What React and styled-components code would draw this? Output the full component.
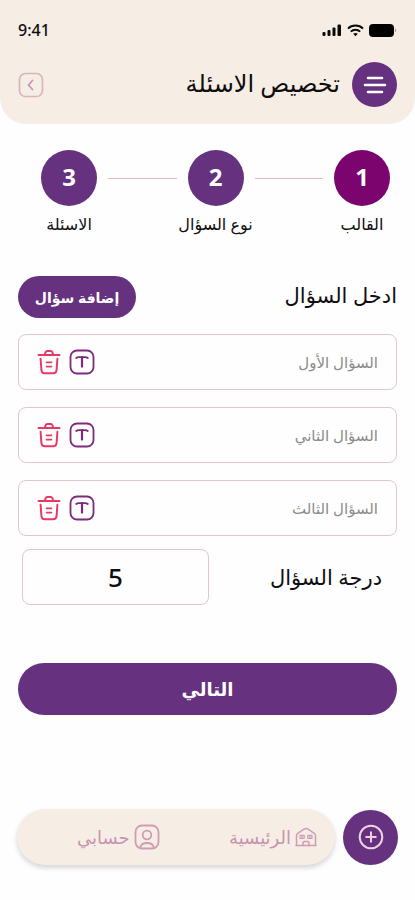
// Importing dependencies
import React from 'react'
import styled, { createGlobalStyle } from 'styled-components'

const steps = [
    { number: 1, label: 'القالب', active: true },
    { number: 2, label: 'نوع السؤال' },
    { number: 3, label: 'الاسئلة' },
]

const questions = ['السؤال الأول', 'السؤال الثاني', 'السؤال الثالث']

// Icons
const SignalIcon = () => (
    <svg width="20" height="14" viewBox="0 0 20 14" fill="#0b0a09" aria-hidden="true">
        <rect x="0.5" y="9" width="3" height="4" rx="1" />
        <rect x="5.5" y="7" width="3" height="6" rx="1" />
        <rect x="10.5" y="4.5" width="3" height="8.5" rx="1" />
        <rect x="15.5" y="1.5" width="3.5" height="11.5" rx="1" />
    </svg>
)

const WifiIcon = () => (
    <svg width="17" height="13" viewBox="0 0 17 13" fill="none" stroke="#0b0a09" strokeWidth="2" aria-hidden="true">
        <path d="M1 4.6C5 .6 12 .6 16 4.6" />
        <path d="M3.8 7.6c2.7-2.6 6.7-2.6 9.4 0" />
        <path d="M6.2 9.8c1.4-1.2 3.2-1.2 4.6 0L8.5 12.2z" fill="#0b0a09" stroke="none" />
    </svg>
)

const BatteryIcon = () => (
    <svg width="28" height="13" viewBox="0 0 28 13" aria-hidden="true">
        <rect x="0" y="0" width="25" height="13" rx="4" fill="#000" />
        <path d="M26.2 4.6c1.4.8 1.4 3 0 3.8z" fill="#8d8883" />
    </svg>
)

const MenuIcon = () => (
    <svg width="24" height="20" viewBox="0 0 24 20" stroke="#fff" strokeWidth="2.6" strokeLinecap="round" aria-hidden="true">
        <path d="M5 3h14M2 10h20M5 17h14" />
    </svg>
)

const BackIcon = () => (
    <svg width="26" height="26" viewBox="0 0 26 26" fill="none" stroke="#dbb3bf" strokeWidth="1.7" strokeLinecap="round" strokeLinejoin="round" aria-hidden="true">
        <rect x="1.5" y="1.5" width="23" height="23" rx="6" />
        <path d="M14.5 8.5L10.5 13l4 4.500" stroke="#c596b1" />
    </svg>
)

const TextIcon = () => (
    <svg width="26" height="26" viewBox="0 0 26 26" fill="none" stroke="#7d2a7c" strokeWidth="1.8" strokeLinecap="round" strokeLinejoin="round" aria-hidden="true">
        <rect x="1.5" y="1.5" width="23" height="23" rx="6.5" />
        <path d="M7.200 9c.8-.7 1.600-.9 2.600-.9h6.400c1 0 1.800.2 2.600.9" />
        <path d="M13 8.200v9.400" strokeWidth="2.200" />
    </svg>
)

const TrashIcon = () => (
    <svg width="24" height="26" viewBox="0 0 24 26" fill="none" stroke="#e63a66" strokeWidth="2" strokeLinecap="round" strokeLinejoin="round" aria-hidden="true">
        <path d="M1.500 6h21" />
        <path d="M7.800 5.600l.8-2.300c.3-.9.800-1.300 1.700-1.300h3.400c.9 0 1.400.4 1.700 1.300l.8 2.300" />
        <path d="M3.600 9.800l.8 11.200c.2 2.400 1.200 3.300 3.400 3.300h8.400c2.200 0 3.200-.9 3.400-3.300l.8-11.200" />
        <path d="M9.500 13.400h5M9.500 17.600h5" strokeWidth="1.600" />
    </svg>
)

const HomeIcon = () => (
    <svg width="22" height="20" viewBox="0 0 22 20" fill="none" stroke="#cf9cb4" strokeWidth="1.5" strokeLinecap="round" strokeLinejoin="round" aria-hidden="true">
        <path d="M1.500 18.500V8.500c0-1 .4-1.700 1.200-2.200L9 2.200c1.300-.9 2.700-.9 4 0l6.300 4.100c.8.500 1.200 1.200 1.200 2.200v10" />
        <path d="M1 18.600h20" />
        <path d="M5 8.300h4.200v3H5zM12.800 8.300H17v3h-4.200zM7.100 8.300v3M14.900 8.300v3" strokeWidth="1.200" />
        <path d="M8 18.500v-2.500c0-1 .5-1.500 1.500-1.500h3c1 0 1.500.5 1.500 1.500v2.500" />
    </svg>
)

const ProfileIcon = () => (
    <svg width="26" height="26" viewBox="0 0 26 26" fill="none" stroke="#cf9cb4" strokeWidth="1.8" strokeLinecap="round" aria-hidden="true">
        <rect x="1.500" y="1.500" width="23" height="23" rx="6.500" />
        <circle cx="13" cy="11" r="4.300" />
        <path d="M6.300 23.500c1-6 12.400-6 13.400 0" />
    </svg>
)

const PlusIcon = () => (
    <svg width="26" height="26" viewBox="0 0 26 26" fill="none" stroke="#ecd3e4" strokeWidth="2" strokeLinecap="round" aria-hidden="true">
        <circle cx="13" cy="13" r="11.300" />
        <path d="M13 8.200v9.600M8.200 13h9.600" />
    </svg>
)


function App() {
    return (
        <Page>
            <GlobalStyle />
            <Header>
                <StatusBar>
                    <Time>9:41</Time>
                    <StatusIcons>
                        <SignalIcon />
                        <WifiIcon />
                        <BatteryIcon />
                    </StatusIcons>
                </StatusBar>
                <TitleBar>
                    <MenuButton aria-label="القائمة"><MenuIcon /></MenuButton>
                    <Title>تخصيص الاسئلة</Title>
                    <IconButton aria-label="رجوع"><BackIcon /></IconButton>
                </TitleBar>
            </Header>
            <Steps>
                {steps.map((step) => (
                    <React.Fragment key={step.number}>
                        {step.number > 1 && <StepLine aria-hidden="true" />}
                        <Step>
                            <StepCircle $active={step.active}>{step.number}</StepCircle>
                            <StepLabel>{step.label}</StepLabel>
                        </Step>
                    </React.Fragment>
                ))}
            </Steps>
            <Form onSubmit={(e) => e.preventDefault()}>
                <FormHeader>
                    <Heading>ادخل السؤال</Heading>
                    <AddButton type="button">إضافة سؤال</AddButton>
                </FormHeader>
                <QuestionList>
                    {questions.map((question) => (
                        <Question key={question}>
                            <QuestionInput type="text" placeholder={question} aria-label={question} />
                            <IconButton type="button" aria-label="نص"><TextIcon /></IconButton>
                            <IconButton type="button" aria-label="حذف"><TrashIcon /></IconButton>
                        </Question>
                    ))}
                </QuestionList>
                <Score>
                    <ScoreLabel htmlFor="score">درجة السؤال</ScoreLabel>
                    <ScoreInput id="score" type="text" inputMode="numeric" defaultValue="5" />
                </Score>
                <NextButton type="submit">التالي</NextButton>
            </Form>
            <BottomBar>
                <AddCircle aria-label="إضافة"><PlusIcon /></AddCircle>
                <Nav>
                    <NavLink href="#home"><HomeIcon />الرئيسية</NavLink>
                    <NavLink href="#account"><ProfileIcon />حسابي</NavLink>
                </Nav>
            </BottomBar>
        </Page>
    )
}

export default App

const GlobalStyle = createGlobalStyle`
    * {
        box-sizing: border-box;
    }

    body {
        margin: 0;
        background: #fefefe;
        color: #0f0d10;
        font-family: "Noto Sans", "DejaVu Sans", sans-serif;
    }

    button, input {
        font-family: inherit;
    }

    button {
        padding: 0;
        border: none;
        cursor: pointer;
    }

    svg {
        display: block;
        flex-shrink: 0;
    }
`

const Page = styled.main`
    direction: rtl;
    display: flex;
    flex-direction: column;
    min-height: 100vh;
`

const Header = styled.header`
    padding: 18px 18px 17px;
    border-radius: 0 0 26px 26px;
    background: #f6eee5;
`

const StatusBar = styled.div`
    direction: ltr;
    display: flex;
    align-items: center;
    justify-content: space-between;
    height: 24px;
    margin-bottom: 20px;
`

const Time = styled.span`
    font-size: 16px;
    font-weight: 500;
    line-height: 24px;
`

const StatusIcons = styled.div`
    display: flex;
    align-items: center;
    gap: 5px;
`

const TitleBar = styled.div`
    display: flex;
    align-items: center;
    gap: 12px;
`

const Title = styled.h1`
    flex: 1;
    margin: 0;
    padding-bottom: 4px;
    font-size: 24px;
    font-weight: 500;
    line-height: 32px;
    white-space: nowrap;
`

const IconButton = styled.button`
    background: none;
`

const MenuButton = styled.button`
    display: grid;
    place-items: center;
    width: 45px;
    height: 45px;
    border-radius: 50%;
    background: #66317e;
`

const Steps = styled.section`
    display: flex;
    gap: 11px;
    padding: 26px 25px 0 41px;
`

const Step = styled.div`
    display: flex;
    flex-direction: column;
    align-items: center;
    width: 56px;
`

const StepCircle = styled.span`
    width: 56px;
    height: 56px;
    border-radius: 50%;
    background: ${({ $active }) => ($active ? '#7c046e' : '#66317e')};
    color: #fff;
    font-size: 24px;
    font-weight: 700;
    line-height: 54px;
    text-align: center;
`

const StepLabel = styled.span`
    margin-top: 6px;
    font-size: 16px;
    line-height: 24px;
    white-space: nowrap;
`

const StepLine = styled.span`
    flex: 1;
    height: 1px;
    margin-top: 28px;
    background: #dfb9c6;
`

const Form = styled.form`
    display: flex;
    flex-direction: column;
    padding: 40px 18px 0;
`

const FormHeader = styled.div`
    display: flex;
    align-items: center;
    justify-content: space-between;
    margin-bottom: 16px;
`

const Heading = styled.h2`
    margin: 0;
    padding-bottom: 4px;
    font-size: 21px;
    font-weight: 500;
    line-height: 32px;
`

const AddButton = styled.button`
    width: 118px;
    height: 42px;
    border-radius: 21px;
    background: #66317e;
    color: #fff;
    font-size: 14px;
    font-weight: 700;
`

const QuestionList = styled.div`
    display: flex;
    flex-direction: column;
    gap: 17px;
`

const Question = styled.div`
    display: flex;
    align-items: center;
    gap: 8px;
    height: 56px;
    padding: 0 18px;
    border: 1px solid #e2c5cf;
    border-radius: 8px;
`

const QuestionInput = styled.input`
    flex: 1;
    min-width: 0;
    padding: 0;
    border: none;
    background: none;
    font-size: 15px;

    &::placeholder {
        color: #8b8b8b;
        opacity: 1;
    }
`

const Score = styled.div`
    display: flex;
    align-items: center;
    justify-content: space-between;
    padding: 13px 15px 0 4px;
`

const ScoreLabel = styled.label`
    font-size: 21px;
    font-weight: 500;
    line-height: 32px;
`

const ScoreInput = styled.input`
    width: 187px;
    height: 56px;
    border: 1px solid #e2c5cf;
    border-radius: 8px;
    background: none;
    color: inherit;
    font-size: 26px;
    font-weight: 500;
    text-align: center;
`

const NextButton = styled.button`
    height: 52px;
    margin-top: 58px;
    border-radius: 26px;
    background: #66317e;
    color: #fff;
    font-size: 18px;
    font-weight: 700;
`

const BottomBar = styled.footer`
    display: flex;
    align-items: center;
    gap: 8px;
    margin-top: auto;
    padding: 0 17px 35px;
`

const AddCircle = styled.button`
    display: grid;
    place-items: center;
    width: 55px;
    height: 55px;
    border-radius: 50%;
    background: #66317e;
`

const Nav = styled.nav`
    flex: 1;
    display: flex;
    align-items: center;
    justify-content: space-between;
    height: 56px;
    padding: 0 18px 0 60px;
    border-radius: 28px;
    background: #f6eee5;
    box-shadow: 0 3px 5px rgba(0, 0, 0, 0.16);
`

const NavLink = styled.a`
    display: flex;
    align-items: center;
    gap: 4px;
    color: #c992ae;
    font-size: 18px;
    line-height: 24px;
    text-decoration: none;
`
